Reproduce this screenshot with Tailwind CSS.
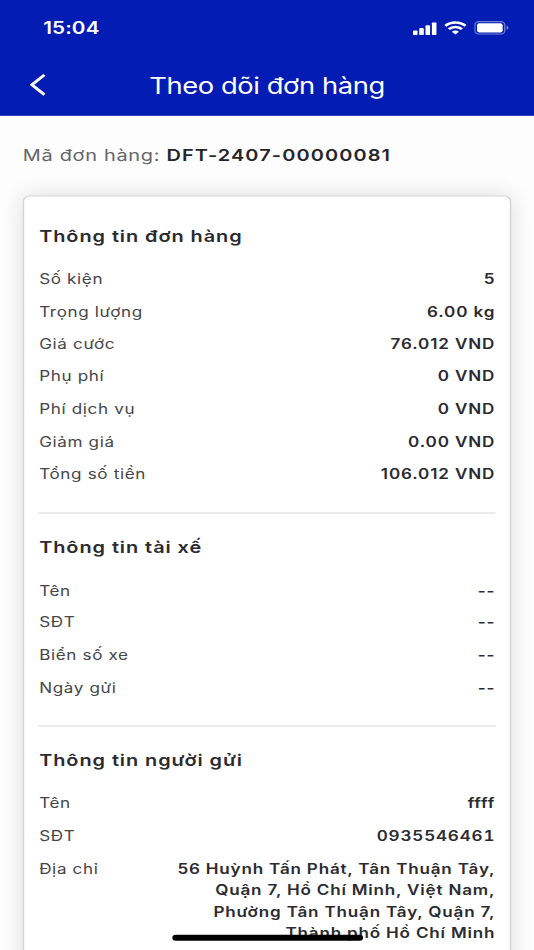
<!DOCTYPE html>
<html lang="vi">
<head>
<meta charset="utf-8">
<title>Theo dõi đơn hàng</title>
<script src="https://cdn.jsdelivr.net/npm/@tailwindcss/browser@4"></script>
</head>
<body class="w-[534px] h-[950px] overflow-hidden bg-white">
<div class="relative w-[375px] h-[812px] overflow-hidden origin-top-left [transform:scale(1.424,1.17)] bg-[#fdfdfd] font-['Inter','Liberation_Sans',sans-serif] text-[#2b2b31]">
  <header class="h-[99px] bg-[#031cb3] text-white flex flex-col">
    <div class="h-[48px] flex items-center justify-between pl-[30.3px] pr-[17.3px]">
      <span class="pt-[0.6px] text-[14.5px] font-semibold leading-[20px] tracking-[0.1px]">15:04</span>
      <div class="flex items-center gap-[5.5px]">
        <svg width="16.5" height="11" viewBox="0 0 16.5 11" fill="currentColor"><rect x="0" y="7" width="3.2" height="4" rx=".8"/><rect x="4.4" y="5" width="3.2" height="6" rx=".8"/><rect x="8.8" y="2.6" width="3.2" height="8.4" rx=".8"/><rect x="13.3" y="0" width="3.2" height="11" rx=".8"/></svg>
        <svg width="15.6" height="11.5" viewBox="0 0 15.6 11.5" fill="none" stroke="currentColor" stroke-width="2.1"><path d="M.7 4.1a10.2 10.2 0 0 1 14.2 0"/><path d="M3.2 6.9a6.5 6.5 0 0 1 9.2 0"/><path d="M5.3 9.1a3.5 3.5 0 0 1 5 0L7.8 11.5Z" fill="currentColor" stroke="none"/></svg>
        <svg width="24.3" height="11.6" viewBox="0 0 24.3 11.6"><rect x=".5" y=".5" width="21" height="10.6" rx="2.8" fill="none" stroke="white" stroke-opacity=".45" stroke-width=".9"/><rect x="2" y="1.9" width="18" height="7.8" rx="1.6" fill="white"/><path d="M22.8 4v3.6c.7-.3 1.2-1 1.2-1.8s-.5-1.5-1.2-1.8Z" fill="white" fill-opacity=".5"/></svg>
      </div>
    </div>
    <div class="h-[50px] grid grid-cols-[50px_1fr_50px] items-center">
      <svg class="ml-[21.2px] mb-[1.2px]" width="11" height="19" viewBox="0 0 11 19" fill="none" stroke="currentColor" stroke-width="2.3"><path d="M10.2 1 1.4 9.5 10.2 18"/></svg>
      <h1 class="text-[19.2px] leading-[26px] tracking-[-0.28px] font-normal text-center whitespace-nowrap">Theo dõi đơn hàng</h1>
    </div>
  </header>
  <main class="px-[16px]">
    <p class="pt-[24.4px] pb-[24px] leading-[20px] text-[14px] tracking-[0.49px] text-[#65656a] whitespace-nowrap">Mã đơn hàng: <span class="font-semibold text-[#25252b] tracking-[0.77px]">DFT-2407-00000081</span></p>
    <div class="h-[700px] rounded-[5px] border border-[#d4d4d5] bg-white shadow-[0_0_18px_rgba(0,0,0,0.12)] px-[10.2px] pt-[23.8px]">
      <section class="border-b border-[#dddddf] pb-[23.1px]">
        <h2 class="pl-[0.3px] text-[14px] leading-[20px] font-semibold tracking-[0.65px] mb-[17.8px]">Thông tin đơn hàng</h2>
        <dl class="pl-[0.3px] flex flex-col gap-[9.3px] text-[12px] leading-[18.4px] [&>div]:flex [&>div]:justify-between [&_dt]:text-[#45454a] [&_dt]:tracking-[0.45px] [&_dd]:tracking-[0.6px] [&_dd]:font-semibold">
          <div><dt>Số kiện</dt><dd>5</dd></div>
          <div><dt>Trọng lượng</dt><dd>6.00 kg</dd></div>
          <div><dt>Giá cước</dt><dd>76.012 VND</dd></div>
          <div><dt>Phụ phí</dt><dd>0 VND</dd></div>
          <div><dt>Phí dịch vụ</dt><dd>0 VND</dd></div>
          <div><dt>Giảm giá</dt><dd>0.00 VND</dd></div>
          <div><dt>Tổng số tiền</dt><dd>106.012 VND</dd></div>
        </dl>
      </section>
      <section class="border-b border-[#dddddf] pt-[19.5px] pb-[22.8px]">
        <h2 class="pl-[0.3px] text-[14px] leading-[20px] font-semibold tracking-[0.65px] mb-[17.5px]">Thông tin tài xế</h2>
        <dl class="pl-[0.3px] flex flex-col gap-[9.3px] text-[12px] leading-[18.4px] [&>div]:flex [&>div]:justify-between [&_dt]:text-[#45454a] [&_dt]:tracking-[0.45px] [&_dd]:tracking-[0.56px] [&_dd]:font-semibold">
          <div><dt>Tên</dt><dd>--</dd></div>
          <div><dt>SĐT</dt><dd>--</dd></div>
          <div><dt>Biển số xe</dt><dd>--</dd></div>
          <div><dt>Ngày gửi</dt><dd>--</dd></div>
        </dl>
      </section>
      <section class="pt-[19.4px]">
        <h2 class="pl-[0.3px] text-[14px] leading-[20px] font-semibold tracking-[0.65px] mb-[18px]">Thông tin người gửi</h2>
        <dl class="pl-[0.3px] flex flex-col gap-[9.3px] text-[12px] leading-[18.4px] [&>div]:flex [&>div]:justify-between [&_dt]:text-[#45454a] [&_dt]:tracking-[0.45px] [&_dd]:tracking-[0.56px] [&_dd]:font-semibold">
          <div><dt>Tên</dt><dd>ffff</dd></div>
          <div><dt>SĐT</dt><dd class="tabular-nums">0935546461</dd></div>
          <div><dt>Địa chỉ</dt><dd class="text-right whitespace-nowrap">56 Huỳnh Tấn Phát, Tân Thuận Tây,<br>Quận 7, Hồ Chí Minh, Việt Nam,<br>Phường Tân Thuận Tây, Quận 7,<br>Thành phố Hồ Chí Minh</dd></div>
        </dl>
      </section>
    </div>
  </main>
  <div class="absolute left-[120.8px] top-[798.7px] w-[134px] h-[5.4px] rounded-full bg-black"></div>
</div>
</body>
</html>
